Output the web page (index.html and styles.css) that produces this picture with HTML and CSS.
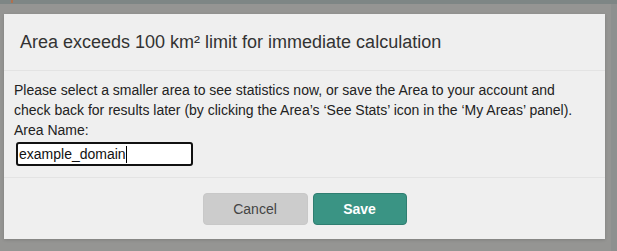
FILE: index.html
```html
<!DOCTYPE html>
<html lang="en">
<head>
<meta charset="utf-8">
<title>Area exceeds limit</title>
<link rel="stylesheet" href="styles.css">
</head>
<body>
<div class="topstrip"><span class="mark"></span></div>
<div class="overlay">
  <div class="modal">
    <div class="modal-header">
      <h4 class="modal-title">Area exceeds 100 km² limit for immediate calculation</h4>
    </div>
    <div class="modal-body">
      <p class="message">Please select a smaller area to see statistics now, or save the Area to your account and check back for results later (by clicking the Area’s ‘See Stats’ icon in the ‘My Areas’ panel).</p>
      <label class="field-label" for="areaName">Area Name:</label>
      <div class="input-box"><span class="input-text">example_domain</span><span class="caret"></span></div>
    </div>
    <div class="modal-footer">
      <button class="btn btn-cancel">Cancel</button>
      <button class="btn btn-save">Save</button>
    </div>
  </div>
</div>
</body>
</html>
```

FILE: styles.css
```css
html, body {
  margin: 0;
  padding: 0;
}

body {
  width: 617px;
  height: 251px;
  overflow: hidden;
  font-family: "Liberation Sans", Arial, sans-serif;
  background: linear-gradient(to right, #959593 0, #959593 611px, #8e908f 611px);
}

.topstrip {
  height: 4px;
  background: #7e8685;
  position: relative;
}

.topstrip .mark {
  position: absolute;
  left: 11px;
  top: 0;
  width: 2px;
  height: 3px;
  background: #b0704f;
}

.overlay {
  padding: 10px 0 0 4px;
}

.modal {
  width: 601px;
  background: #efefef;
  box-shadow: 0 1px 3px rgba(0, 0, 0, 0.15);
}

.modal-header {
  padding: 15px 16px;
  border-bottom: 1px solid #e3e3e3;
}

.modal-title {
  margin: 0;
  font-size: 18px;
  line-height: 26px;
  font-weight: normal;
  color: #333;
}

.modal-body {
  padding: 9px 10px 11px;
  font-size: 14px;
  line-height: 20px;
  color: #222;
}

.message {
  margin: 0;
}

.field-label {
  display: block;
}

.input-box {
  margin: 2px 0 0 2px;
  width: 172px;
  height: 20px;
  border: 2px solid #111;
  border-radius: 3px;
  background: #fff;
  display: flex;
  align-items: center;
  padding: 0 0 0 1px;
  font-size: 14px;
  color: #111;
}

.caret {
  display: inline-block;
  width: 1px;
  height: 17px;
  background: #000;
}

.modal-footer {
  border-top: 1px solid #e3e3e3;
  padding: 15px 0 14px;
  display: flex;
  justify-content: center;
  gap: 5px;
}

.btn {
  height: 32px;
  border-radius: 4px;
  font-family: "Liberation Sans", Arial, sans-serif;
  font-size: 14px;
  padding: 0;
  cursor: pointer;
}

.btn-cancel {
  width: 105px;
  background: #cccccc;
  border: 1px solid #c8c8c8;
  color: #444;
}

.btn-save {
  width: 94px;
  background: #3a9484;
  border: 1px solid #2f7e71;
  color: #fff;
  font-weight: bold;
}
```
